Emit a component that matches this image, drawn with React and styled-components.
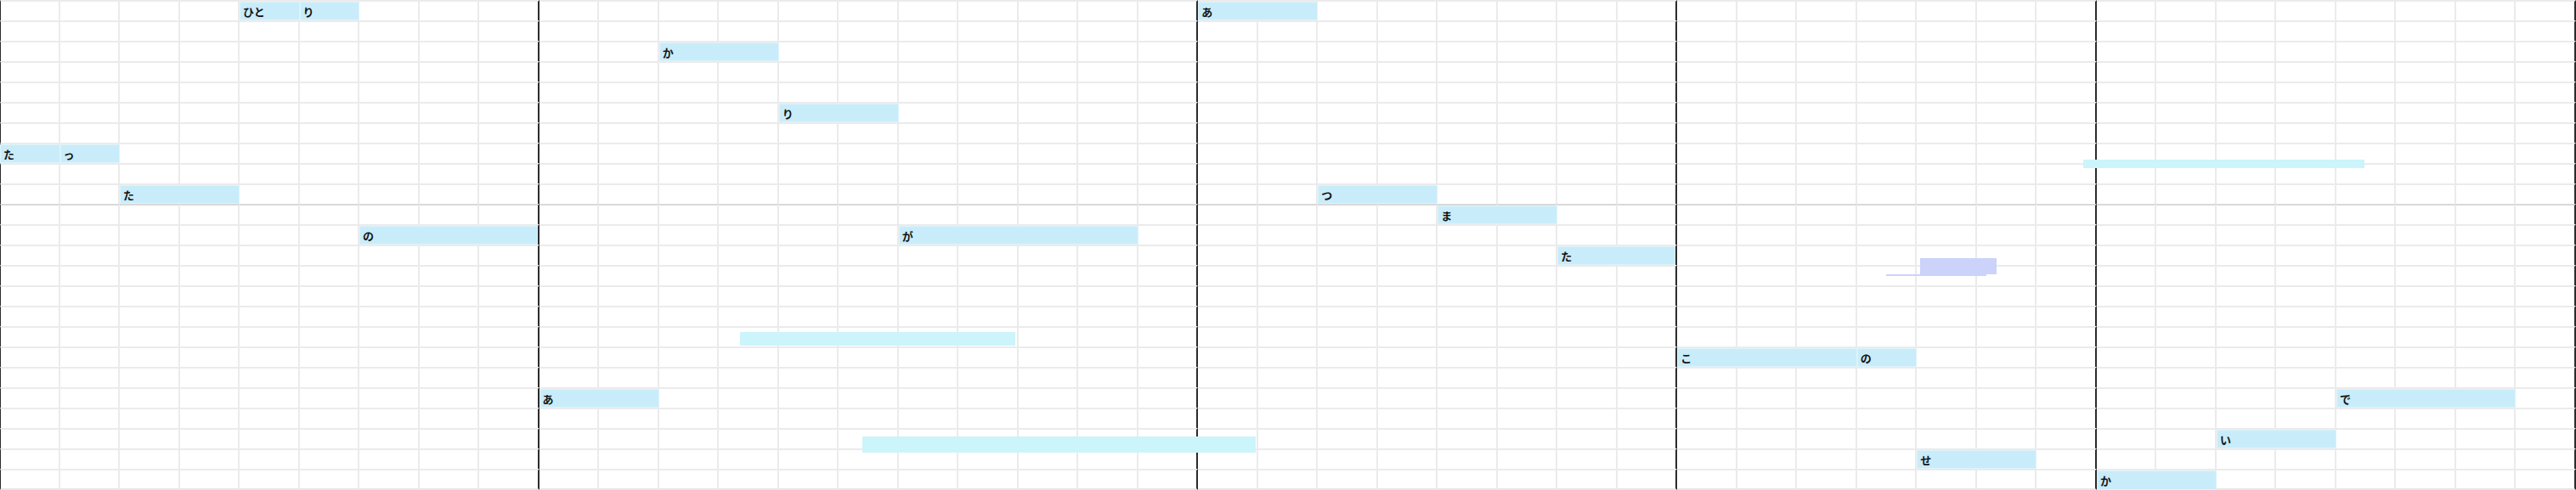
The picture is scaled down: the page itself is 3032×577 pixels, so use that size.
import React from 'react';
import styled, { createGlobalStyle, css } from 'styled-components';

const COLS = 43;
const ROWS = 24;
const MEASURES = [9, 11, 8, 7, 8];
const OCTAVE_ROW = 10;

// columns where a new measure begins (black bar line on the left)
const barStarts = MEASURES.reduce(
  (acc, n) => [...acc, acc[acc.length - 1] + n],
  [0]
);

const notes = [
  { row: 0, col: 4, span: 1, text: 'ひと' },
  { row: 0, col: 5, span: 1, text: 'り' },
  { row: 7, col: 0, span: 1, text: 'た' },
  { row: 7, col: 1, span: 1, text: 'っ' },
  { row: 9, col: 2, span: 2, text: 'た' },
  { row: 11, col: 6, span: 3, text: 'の' },
  { row: 2, col: 11, span: 2, text: 'か' },
  { row: 5, col: 13, span: 2, text: 'り' },
  { row: 11, col: 15, span: 4, text: 'が' },
  { row: 19, col: 9, span: 2, text: 'あ' },
  { row: 0, col: 20, span: 2, text: 'あ' },
  { row: 9, col: 22, span: 2, text: 'つ' },
  { row: 10, col: 24, span: 2, text: 'ま' },
  { row: 12, col: 26, span: 2, text: 'た' },
  { row: 17, col: 28, span: 3, text: 'こ' },
  { row: 17, col: 31, span: 1, text: 'の' },
  { row: 22, col: 32, span: 2, text: 'せ' },
  { row: 23, col: 35, span: 2, text: 'か' },
  { row: 21, col: 37, span: 2, text: 'い' },
  { row: 19, col: 39, span: 3, text: 'で' },
];

// drag previews floating over the roll
const ghosts = [
  { x: 871, y: 391, w: 324, h: 16, tone: 'cyan' },
  { x: 1015, y: 514, w: 463, h: 19, tone: 'cyan' },
  { x: 2452, y: 188, w: 331, h: 10, tone: 'cyan' },
  { x: 2260, y: 304, w: 90, h: 19, tone: 'violet' },
  { x: 2220, y: 323, w: 118, h: 2, tone: 'violet' },
];

const GlobalStyle = createGlobalStyle`
  html, body {
    margin: 0;
    padding: 0;
    background: #ffffff;
  }
  body {
    font-family: "Noto Sans CJK JP", "Noto Sans", sans-serif;
  }
`;

const Roll = styled.div`
  display: grid;
  grid-template: 1fr / 1fr;
  width: 3032px;
  height: 577px;
  overflow: hidden;
  background: #fff;
`;

const layer = css`
  grid-area: 1 / 1;
  display: grid;
  grid-template-columns: repeat(${COLS}, 1fr);
  grid-template-rows: repeat(${ROWS - 1}, 24px) 25px;
`;

const Lines = styled.div`
  ${layer}
`;

const Cell = styled.div`
  box-sizing: border-box;
  border-top: 2px solid ${(p) => (p.$octave ? '#d9d9d9' : '#ebebeb')};
  border-right: 2px solid ${(p) => (p.$barAfter ? '#2b2b2b' : '#ebebeb')};
  ${(p) => p.$first && 'border-left: 1px solid #2b2b2b;'}
  ${(p) => p.$bottom && 'border-bottom: 2px solid #e6e6e6;'}
`;

const Notes = styled.div`
  ${layer}
  position: relative;
`;

const Note = styled.div`
  grid-column: ${(p) => p.$col + 1} / span ${(p) => p.$span};
  grid-row: ${(p) => p.$row + 1};
  margin-top: 2px;
  margin-right: ${(p) => (p.$barAfter ? '2px' : '0')};
  box-sizing: border-box;
  background: #c9ecfa;
  border: 1px solid #dcf3fc;
  padding: 0 3px;
  display: flex;
  align-items: center;
  font-size: 13px;
  font-weight: 700;
  color: #141414;
  white-space: nowrap;
  overflow: hidden;
`;

const Ghost = styled.div`
  position: absolute;
  background: ${(p) => (p.$tone === 'violet' ? '#cbd3fa' : '#ccf4fb')};
`;

export default function App() {
  const cells = [];
  for (let r = 0; r < ROWS; r++) {
    for (let c = 0; c < COLS; c++) {
      cells.push(
        <Cell
          key={`${r}-${c}`}
          $octave={r === OCTAVE_ROW}
          $barAfter={barStarts.includes(c + 1)}
          $first={c === 0}
          $bottom={r === ROWS - 1}
        />
      );
    }
  }

  return (
    <>
      <GlobalStyle />
      <Roll>
        <Lines>{cells}</Lines>
        <Notes>
          {notes.map((n, i) => (
            <Note
              key={i}
              $row={n.row}
              $col={n.col}
              $span={n.span}
              $barAfter={barStarts.includes(n.col + n.span)}
            >
              {n.text}
            </Note>
          ))}
          {ghosts.map((g, i) => (
            <Ghost
              key={`g${i}`}
              $tone={g.tone}
              style={{ left: g.x, top: g.y, width: g.w, height: g.h }}
            />
          ))}
        </Notes>
      </Roll>
    </>
  );
}
